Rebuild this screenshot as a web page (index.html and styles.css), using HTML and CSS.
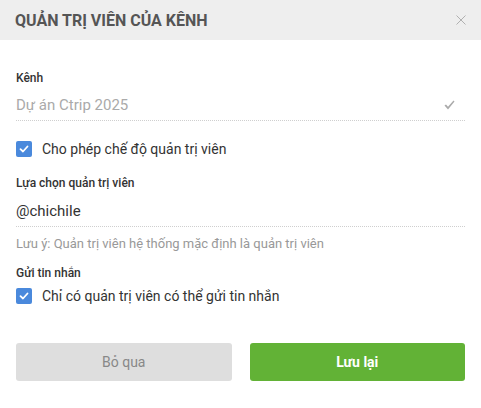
FILE: index.html
```html
<!DOCTYPE html>
<html lang="vi">
<head>
<meta charset="utf-8">
<title>Quản trị viên của kênh</title>
<link rel="stylesheet" href="styles.css">
</head>
<body>
<div class="dialog">
  <div class="header">
    <div class="title">QUẢN TRỊ VIÊN CỦA KÊNH</div>
    <svg class="close" width="10" height="10" viewBox="0 0 10 10"><path d="M0.5 0.5L9.5 9.5M9.5 0.5L0.5 9.5" stroke="#b0b0b0" stroke-width="1"/></svg>
  </div>
  <div class="body">
    <div class="label first">Kênh</div>
    <div class="field">
      <span class="value muted">Dự án Ctrip 2025</span>
      <svg class="ok" width="11" height="10" viewBox="0 0 11 10"><path d="M0.5 5.5L2 4.5L4 6.8L9.5 0.5L10.5 1.5L4 9.5Z" fill="#aaa"/></svg>
    </div>
    <div class="check first-check">
      <span class="box"><svg width="10" height="8" viewBox="0 0 10 8"><path d="M1.5 4.2L4 6.5L8.5 1.5" stroke="#fff" stroke-width="1.8" fill="none" stroke-linecap="round" stroke-linejoin="round"/></svg></span>
      <span class="check-text">Cho phép chế độ quản trị viên</span>
    </div>
    <div class="label second">Lựa chọn quản trị viên</div>
    <div class="field tall">
      <span class="value">@chichile</span>
    </div>
    <div class="note">Lưu ý: Quản trị viên hệ thống mặc định là quản trị viên</div>
    <div class="label third">Gửi tin nhắn</div>
    <div class="check second-check">
      <span class="box"><svg width="10" height="8" viewBox="0 0 10 8"><path d="M1.5 4.2L4 6.5L8.5 1.5" stroke="#fff" stroke-width="1.8" fill="none" stroke-linecap="round" stroke-linejoin="round"/></svg></span>
      <span class="check-text">Chỉ có quản trị viên có thể gửi tin nhắn</span>
    </div>
    <div class="actions">
      <button class="btn cancel">Bỏ qua</button>
      <button class="btn save">Lưu lại</button>
    </div>
  </div>
</div>
</body>
</html>
```
FILE: styles.css
```css
* { box-sizing: border-box; }
html, body { margin: 0; padding: 0; background: #fff; }
body { font-family: Roboto, "Noto Sans", Arial, sans-serif; color: #333; width: 481px; height: 408px; overflow: hidden; }
.header {
  height: 40px;
  background: #eeeeee;
  display: flex;
  align-items: center;
  justify-content: space-between;
  padding: 0 15px 0 15px;
}
.title { font-size: 16px; font-weight: 700; color: #555; letter-spacing: 0; }
.close { margin-right: 0; margin-bottom: 1px; }
.body { padding: 0 16px; }
.label { font-size: 12px; line-height: 16px; font-weight: 500; color: #333; }
.label.first { margin-top: 30px; }
.label.second { margin-top: 18px; }
.label.third { margin-top: 13px; }
.field {
  display: flex;
  align-items: center;
  justify-content: space-between;
  padding: 9px 0 5px;
  border-bottom: 1px dotted #cfcfcf;
}
.field.tall { padding: 10px 0 5px; }
.value { font-size: 15px; line-height: 20px; color: #333; }
.value.muted { color: #aaa; }
.ok { margin-right: 10px; }
.check { display: flex; align-items: center; gap: 10px; }
.first-check { margin-top: 20px; }
.second-check { margin-top: 7px; }
.box {
  width: 16px; height: 16px; border-radius: 2px;
  background: #4a89dc;
  display: flex; align-items: center; justify-content: center;
}
.check-text { font-size: 14px; line-height: 16px; color: #333; }
.note { font-size: 13px; line-height: 16px; color: #999; margin-top: 9px; }
.actions { display: flex; gap: 18px; margin-top: 39px; }
.btn {
  flex: 1;
  height: 38px;
  border: none;
  border-radius: 3px;
  font-family: Roboto, "Noto Sans", Arial, sans-serif;
  font-size: 14px;
}
.cancel { background: #dedede; color: #888; }
.save { background: #62b236; color: #fff; font-weight: 700; }
```
